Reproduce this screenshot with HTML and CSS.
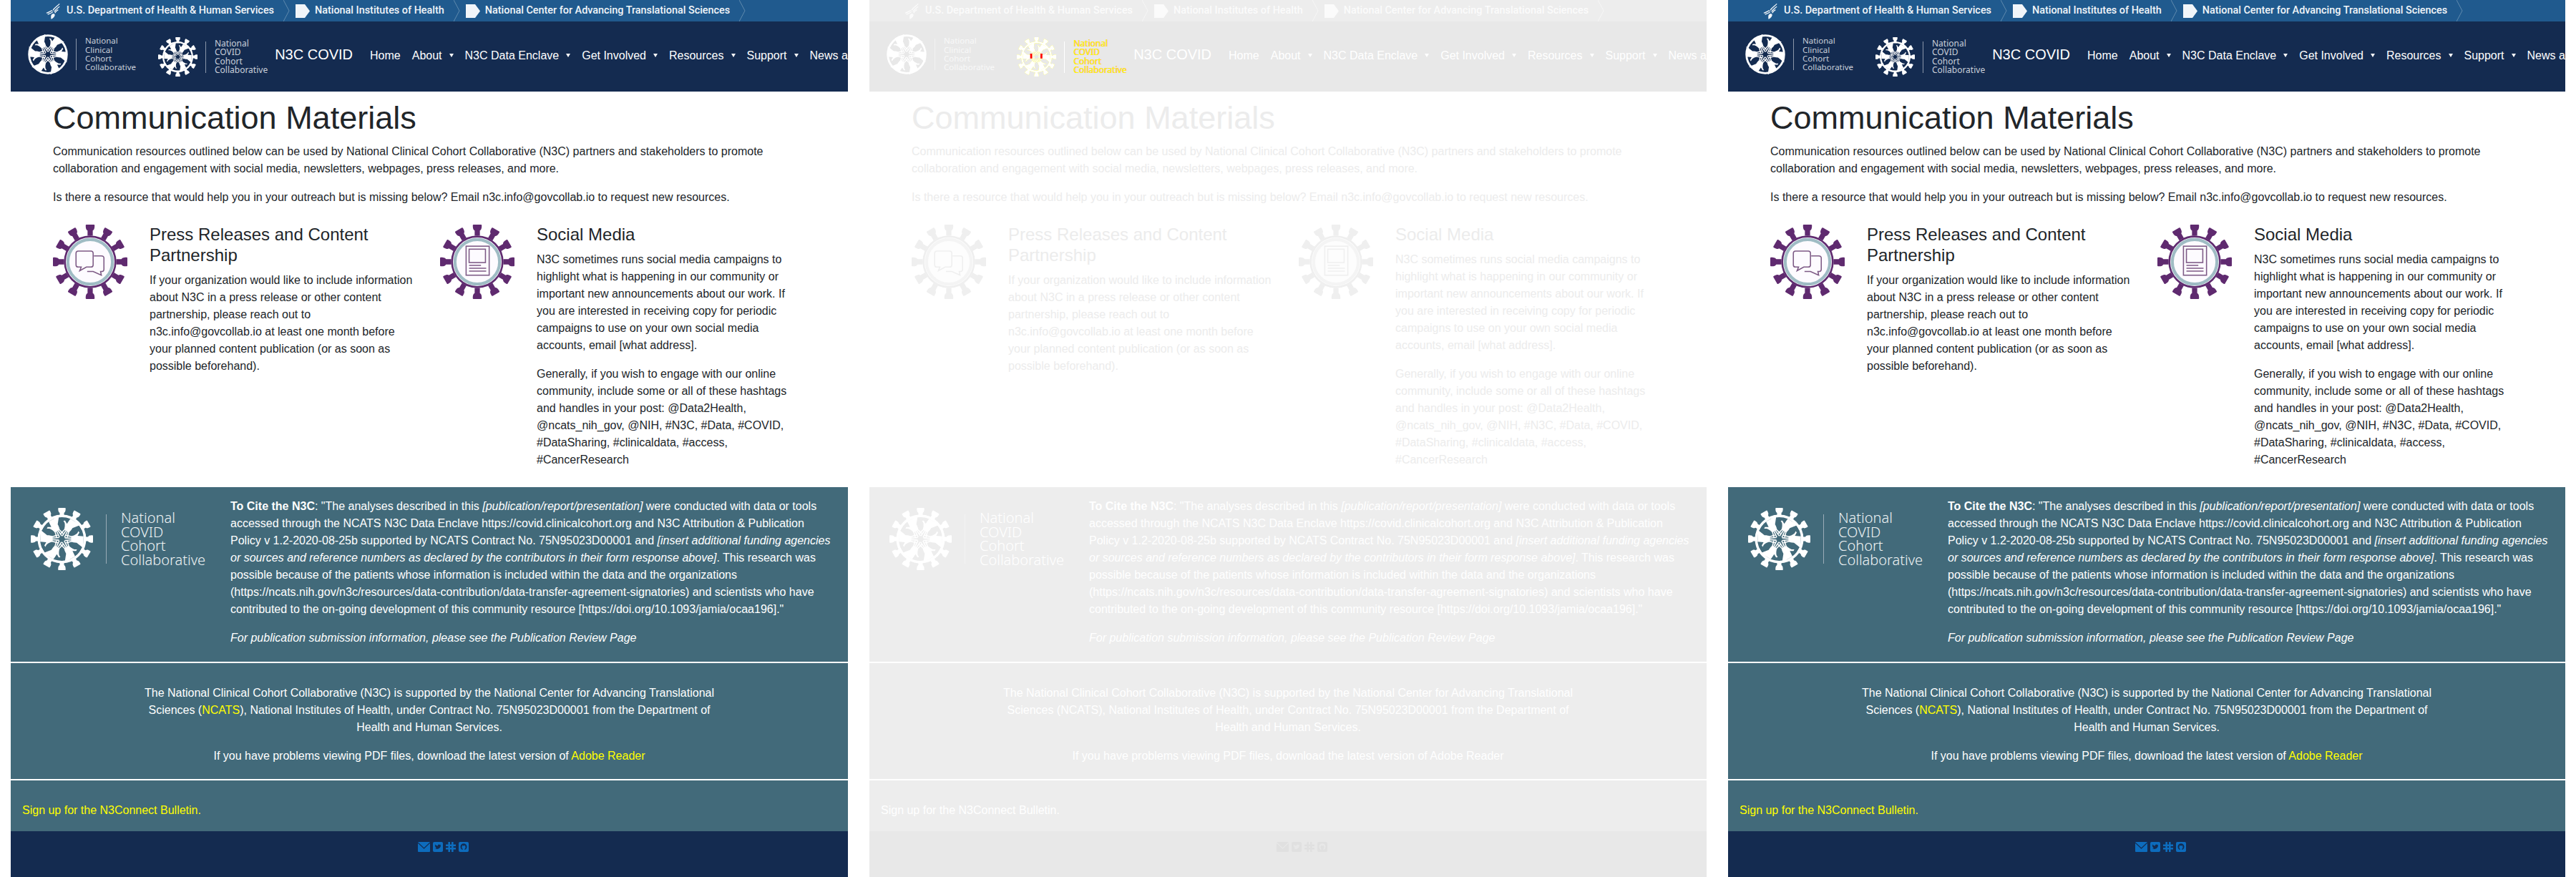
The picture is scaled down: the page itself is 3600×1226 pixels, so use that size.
FILE: index.html
```html
<!DOCTYPE html>
<html lang="en">
<head>
<meta charset="utf-8">
<title>Communication Materials</title>
<link rel="stylesheet" href="styles.css">
</head>
<body>
<svg class="sprite" xmlns="http://www.w3.org/2000/svg">
  <defs>
    <g id="hand">
      <path d="M44 3 L70 3 L58 18 C58 24 57 27 56 30 L44 30 C43 26 42 22 38 17 L33 14 L36 12 L43 16 Z" fill="currentColor"/>
      <path d="M45 29 L42 41 M48.5 30 L47.5 43 M52 30 L53 43 M55 29 L58 40" fill="none" stroke="currentColor" stroke-width="2.4" stroke-linecap="round"/>
    </g>
    <g id="hands">
      <use href="#hand" transform="rotate(30 50 50)"/>
      <use href="#hand" transform="rotate(90 50 50)"/>
      <use href="#hand" transform="rotate(150 50 50)"/>
      <use href="#hand" transform="rotate(210 50 50)"/>
      <use href="#hand" transform="rotate(270 50 50)"/>
      <use href="#hand" transform="rotate(330 50 50)"/>
    </g>
    <path id="spike" d="M46.5 15 L46.5 8 C45 7 44 6 44 1 Q44 0 45 0 L55 0 Q56 0 56 1 C56 6 55 7 53.5 8 L53.5 15 Z"/>
    <g id="spikes">
      <use href="#spike"/>
      <use href="#spike" transform="rotate(30 50 50)"/>
      <use href="#spike" transform="rotate(60 50 50)"/>
      <use href="#spike" transform="rotate(90 50 50)"/>
      <use href="#spike" transform="rotate(120 50 50)"/>
      <use href="#spike" transform="rotate(150 50 50)"/>
      <use href="#spike" transform="rotate(180 50 50)"/>
      <use href="#spike" transform="rotate(210 50 50)"/>
      <use href="#spike" transform="rotate(240 50 50)"/>
      <use href="#spike" transform="rotate(270 50 50)"/>
      <use href="#spike" transform="rotate(300 50 50)"/>
      <use href="#spike" transform="rotate(330 50 50)"/>
    </g>
    <symbol id="disc-logo" viewBox="0 0 100 100">
      <circle cx="50" cy="50" r="47" fill="none" stroke="currentColor" stroke-width="5"/>
      <use href="#hands"/>
    </symbol>
    <symbol id="virus-logo" viewBox="0 0 100 100">
      <g fill="currentColor"><use href="#spikes"/></g>
      <circle cx="50" cy="50" r="37" fill="none" stroke="currentColor" stroke-width="4"/>
      <g transform="translate(50 50) scale(.74) translate(-50 -50)"><use href="#hands"/></g>
      <path class="virus-noise" d="M34 42 H39 V54 H34 Z M60 42 H65 V54 H60 Z"/>
    </symbol>
    <symbol id="badge" viewBox="0 0 100 100">
      <g class="badge-spikes"><use href="#spikes"/></g>
      <circle class="badge-rim" cx="50" cy="50" r="34"/>
      <circle class="badge-teal" cx="50" cy="50" r="30"/>
    </symbol>
    <symbol id="eagle" viewBox="0 0 24 26">
      <path d="M22 2 C18 6 14 8 12 12 M22 6 C19 9 16 10 14 14 M20 11 C18 12 16 14 15 16 M2 16 C6 15 8 13 11 12 M4 18 C7 17 10 16 12 14" fill="none" stroke="currentColor" stroke-width="1.4"/>
      <path d="M9 20 C11 16 14 16 15 19 C14 23 11 25 9 25 Z" fill="currentColor"/>
    </symbol>
    <symbol id="flag" viewBox="0 0 20 19">
      <path d="M0 0 H13 L20 9.5 L13 19 H0 Z" fill="currentColor"/>
    </symbol>
    <symbol id="chev" viewBox="0 0 9 30">
      <path d="M0 0 L8 15 L0 30" fill="none" stroke="currentColor" stroke-width="1"/>
    </symbol>
    <symbol id="ico-mail" viewBox="0 0 17 14">
      <rect width="17" height="14" rx="1" fill="currentColor"/>
      <path d="M0 1 L8.5 9 L17 1" fill="none" class="ico-cut" stroke-width="1.2"/>
    </symbol>
    <symbol id="ico-twitter" viewBox="0 0 14 14">
      <rect width="14" height="14" rx="2" fill="currentColor"/>
      <path class="ico-fill" d="M11 4.2 C10.6 4.4 10.2 4.5 9.9 4.6 C10.3 4.3 10.5 3.9 10.7 3.5 C10.3 3.7 9.9 3.9 9.4 4 C8.5 3 6.5 3.7 6.9 5.4 C5.3 5.3 4 4.6 3.1 3.5 C2.7 4.3 2.9 5.2 3.6 5.7 C3.3 5.7 3 5.6 2.8 5.5 C2.8 6.3 3.4 7 4.2 7.2 C3.9 7.3 3.7 7.3 3.4 7.2 C3.7 7.9 4.3 8.3 5 8.4 C4.3 9 3.4 9.2 2.5 9.1 C6.6 11.4 11.2 8.6 11 4.2 Z"/>
    </symbol>
    <symbol id="ico-slack" viewBox="0 0 14 14">
      <path d="M4.7 0.5 V13.5 M9.3 0.5 V13.5 M0.5 4.7 H13.5 M0.5 9.3 H13.5" fill="none" stroke="currentColor" stroke-width="2.6" stroke-linecap="round"/>
    </symbol>
    <symbol id="ico-github" viewBox="0 0 14 14">
      <rect width="14" height="14" rx="2" fill="currentColor"/>
      <path class="ico-fill" d="M7 2.2 C4.4 2.2 2.5 4.2 2.5 6.7 C2.5 8.7 3.8 10.4 5.6 11 L5.6 9.6 C4.9 9.2 4.4 8.4 4.4 7.2 C4.4 6.7 4.6 6.2 4.9 5.9 L4.9 4.6 L6.1 5.2 C6.7 5.1 7.3 5.1 7.9 5.2 L9.1 4.6 L9.1 5.9 C9.4 6.2 9.6 6.7 9.6 7.2 C9.6 8.4 9.1 9.2 8.4 9.6 L8.4 11 C10.2 10.4 11.5 8.7 11.5 6.7 C11.5 4.2 9.6 2.2 7 2.2 Z"/>
    </symbol>
  </defs>
</svg>

<main class="triptych">

  <!-- Panel 1 -->
  <article class="panel">
    <div class="crumbs">
      <svg class="eagle"><use href="#eagle"/></svg>
      <span class="crumb crumb-hhs">U.S. Department of Health &amp; Human Services</span>
      <svg class="chev"><use href="#chev"/></svg>
      <svg class="flag"><use href="#flag"/></svg>
      <span class="crumb">National Institutes of Health</span>
      <svg class="chev"><use href="#chev"/></svg>
      <svg class="flag"><use href="#flag"/></svg>
      <span class="crumb">National Center for Advancing Translational Sciences</span>
      <svg class="chev"><use href="#chev"/></svg>
    </div>
    <header class="nav">
      <div class="logo logo-clinical">
        <svg class="logo-mark"><use href="#disc-logo"/></svg>
        <span class="logo-rule"></span>
        <span class="logo-text"><span>National</span><span>Clinical</span><span>Cohort</span><span>Collaborative</span></span>
      </div>
      <div class="logo logo-covid">
        <svg class="logo-mark"><use href="#virus-logo"/></svg>
        <span class="logo-rule"></span>
        <span class="logo-text"><span>National</span><span>COVID</span><span>Cohort</span><span>Collaborative</span></span>
      </div>
      <span class="brand">N3C COVID</span>
      <nav class="links">
        <a>Home</a><a class="drop">About</a><a class="drop">N3C Data Enclave</a><a class="drop">Get Involved</a><a class="drop">Resources</a><a class="drop">Support</a><a>News and Events</a>
      </nav>
    </header>
    <section class="content">
      <h1>Communication Materials</h1>
      <p>Communication resources outlined below can be used by National Clinical Cohort Collaborative (N3C) partners and stakeholders to promote collaboration and engagement with social media, newsletters, webpages, press releases, and more.</p>
      <p>Is there a resource that would help you in your outreach but is missing below? Email n3c.info@govcollab.io to request new resources.</p>
      <div class="cards">
        <div class="card">
          <svg class="badge">
            <use href="#badge"/>
            <svg viewBox="0 0 100 100"><g class="glyph"><path d="M34 35.5 H51 Q54 35.5 54 38.5 V54 Q54 57 51 57 H45 L36 62 L38 57 H34 Q31 57 31 54 V38.5 Q31 35.5 34 35.5 Z"/><path d="M55 42 H65 Q68.5 42 68.5 45 V60 Q68.5 63 65 63 H64 L65 68 L54 63 H46"/></g></svg>
          </svg>
          <div class="card-body">
            <h3>Press Releases and Content Partnership</h3>
            <p>If your organization would like to include information about N3C in a press release or other content partnership, please reach out to n3c.info@govcollab.io at least one month before your planned content publication (or as soon as possible beforehand).</p>
          </div>
        </div>
        <div class="card">
          <svg class="badge">
            <use href="#badge"/>
            <svg viewBox="0 0 100 100"><g class="glyph"><rect x="35" y="29" width="31" height="39"/><rect x="39" y="33" width="22" height="18"/><path d="M39 54.8 H55 M39 58.6 H62 M39 62.5 H62"/></g></svg>
          </svg>
          <div class="card-body">
            <h3>Social Media</h3>
            <p>N3C sometimes runs social media campaigns to highlight what is happening in our community or important new announcements about our work. If you are interested in receiving copy for periodic campaigns to use on your own social media accounts, email [what address].</p>
            <p>Generally, if you wish to engage with our online community, include some or all of these hashtags and handles in your post: @Data2Health, @ncats_nih_gov, @NIH, #N3C, #Data, #COVID, #DataSharing, #clinicaldata, #access, #CancerResearch</p>
          </div>
        </div>
      </div>
    </section>
    <section class="teal">
      <div class="cite">
        <div class="logo logo-foot">
          <svg class="logo-mark"><use href="#virus-logo"/></svg>
          <span class="logo-rule"></span>
          <span class="logo-text"><span>National</span><span>COVID</span><span>Cohort</span><span>Collaborative</span></span>
        </div>
        <div class="cite-text">
          <p><strong>To Cite the N3C</strong>: "The analyses described in this <em>[publication/report/presentation]</em> were conducted with data or tools accessed through the NCATS N3C Data Enclave https://covid.clinicalcohort.org and N3C Attribution &amp; Publication Policy v 1.2-2020-08-25b supported by NCATS Contract No. 75N95023D00001 and <em>[insert additional funding agencies or sources and reference numbers as declared by the contributors in their form response above]</em>. This research was possible because of the patients whose information is included within the data and the organizations (https://ncats.nih.gov/n3c/resources/data-contribution/data-transfer-agreement-signatories) and scientists who have contributed to the on-going development of this community resource [https://doi.org/10.1093/jamia/ocaa196]."</p>
          <p><em>For publication submission information, please see the Publication Review Page</em></p>
        </div>
      </div>
      <div class="support">
        <p>The National Clinical Cohort Collaborative (N3C) is supported by the National Center for Advancing Translational Sciences (<a class="hl">NCATS</a>), National Institutes of Health, under Contract No. 75N95023D00001 from the Department of Health and Human Services.</p>
        <p>If you have problems viewing PDF files, download the latest version of <a class="hl">Adobe Reader</a></p>
      </div>
      <div class="bulletin"><a class="hl">Sign up for the N3Connect Bulletin.</a></div>
    </section>
    <footer class="foot">
      <svg class="ico ico-w17"><use href="#ico-mail"/></svg>
      <svg class="ico"><use href="#ico-twitter"/></svg>
      <svg class="ico"><use href="#ico-slack"/></svg>
      <svg class="ico"><use href="#ico-github"/></svg>
    </footer>
  </article>

  <!-- Panel 2 -->
  <article class="panel ghost">
    <div class="crumbs">
      <svg class="eagle"><use href="#eagle"/></svg>
      <span class="crumb crumb-hhs">U.S. Department of Health &amp; Human Services</span>
      <svg class="chev"><use href="#chev"/></svg>
      <svg class="flag"><use href="#flag"/></svg>
      <span class="crumb">National Institutes of Health</span>
      <svg class="chev"><use href="#chev"/></svg>
      <svg class="flag"><use href="#flag"/></svg>
      <span class="crumb">National Center for Advancing Translational Sciences</span>
      <svg class="chev"><use href="#chev"/></svg>
    </div>
    <header class="nav">
      <div class="logo logo-clinical">
        <svg class="logo-mark"><use href="#disc-logo"/></svg>
        <span class="logo-rule"></span>
        <span class="logo-text"><span>National</span><span>Clinical</span><span>Cohort</span><span>Collaborative</span></span>
      </div>
      <div class="logo logo-covid">
        <svg class="logo-mark"><use href="#virus-logo"/></svg>
        <span class="logo-rule"></span>
        <span class="logo-text"><span>National</span><span>COVID</span><span>Cohort</span><span>Collaborative</span></span>
      </div>
      <span class="brand">N3C COVID</span>
      <nav class="links">
        <a>Home</a><a class="drop">About</a><a class="drop">N3C Data Enclave</a><a class="drop">Get Involved</a><a class="drop">Resources</a><a class="drop">Support</a><a>News and Events</a>
      </nav>
    </header>
    <section class="content">
      <h1>Communication Materials</h1>
      <p>Communication resources outlined below can be used by National Clinical Cohort Collaborative (N3C) partners and stakeholders to promote collaboration and engagement with social media, newsletters, webpages, press releases, and more.</p>
      <p>Is there a resource that would help you in your outreach but is missing below? Email n3c.info@govcollab.io to request new resources.</p>
      <div class="cards">
        <div class="card">
          <svg class="badge">
            <use href="#badge"/>
            <svg viewBox="0 0 100 100"><g class="glyph"><path d="M34 35.5 H51 Q54 35.5 54 38.5 V54 Q54 57 51 57 H45 L36 62 L38 57 H34 Q31 57 31 54 V38.5 Q31 35.5 34 35.5 Z"/><path d="M55 42 H65 Q68.5 42 68.5 45 V60 Q68.5 63 65 63 H64 L65 68 L54 63 H46"/></g></svg>
          </svg>
          <div class="card-body">
            <h3>Press Releases and Content Partnership</h3>
            <p>If your organization would like to include information about N3C in a press release or other content partnership, please reach out to n3c.info@govcollab.io at least one month before your planned content publication (or as soon as possible beforehand).</p>
          </div>
        </div>
        <div class="card">
          <svg class="badge">
            <use href="#badge"/>
            <svg viewBox="0 0 100 100"><g class="glyph"><rect x="35" y="29" width="31" height="39"/><rect x="39" y="33" width="22" height="18"/><path d="M39 54.8 H55 M39 58.6 H62 M39 62.5 H62"/></g></svg>
          </svg>
          <div class="card-body">
            <h3>Social Media</h3>
            <p>N3C sometimes runs social media campaigns to highlight what is happening in our community or important new announcements about our work. If you are interested in receiving copy for periodic campaigns to use on your own social media accounts, email [what address].</p>
            <p>Generally, if you wish to engage with our online community, include some or all of these hashtags and handles in your post: @Data2Health, @ncats_nih_gov, @NIH, #N3C, #Data, #COVID, #DataSharing, #clinicaldata, #access, #CancerResearch</p>
          </div>
        </div>
      </div>
    </section>
    <section class="teal">
      <div class="cite">
        <div class="logo logo-foot">
          <svg class="logo-mark"><use href="#virus-logo"/></svg>
          <span class="logo-rule"></span>
          <span class="logo-text"><span>National</span><span>COVID</span><span>Cohort</span><span>Collaborative</span></span>
        </div>
        <div class="cite-text">
          <p><strong>To Cite the N3C</strong>: "The analyses described in this <em>[publication/report/presentation]</em> were conducted with data or tools accessed through the NCATS N3C Data Enclave https://covid.clinicalcohort.org and N3C Attribution &amp; Publication Policy v 1.2-2020-08-25b supported by NCATS Contract No. 75N95023D00001 and <em>[insert additional funding agencies or sources and reference numbers as declared by the contributors in their form response above]</em>. This research was possible because of the patients whose information is included within the data and the organizations (https://ncats.nih.gov/n3c/resources/data-contribution/data-transfer-agreement-signatories) and scientists who have contributed to the on-going development of this community resource [https://doi.org/10.1093/jamia/ocaa196]."</p>
          <p><em>For publication submission information, please see the Publication Review Page</em></p>
        </div>
      </div>
      <div class="support">
        <p>The National Clinical Cohort Collaborative (N3C) is supported by the National Center for Advancing Translational Sciences (<a class="hl">NCATS</a>), National Institutes of Health, under Contract No. 75N95023D00001 from the Department of Health and Human Services.</p>
        <p>If you have problems viewing PDF files, download the latest version of <a class="hl">Adobe Reader</a></p>
      </div>
      <div class="bulletin"><a class="hl">Sign up for the N3Connect Bulletin.</a></div>
    </section>
    <footer class="foot">
      <svg class="ico ico-w17"><use href="#ico-mail"/></svg>
      <svg class="ico"><use href="#ico-twitter"/></svg>
      <svg class="ico"><use href="#ico-slack"/></svg>
      <svg class="ico"><use href="#ico-github"/></svg>
    </footer>
  </article>

  <!-- Panel 3 -->
  <article class="panel">
    <div class="crumbs">
      <svg class="eagle"><use href="#eagle"/></svg>
      <span class="crumb crumb-hhs">U.S. Department of Health &amp; Human Services</span>
      <svg class="chev"><use href="#chev"/></svg>
      <svg class="flag"><use href="#flag"/></svg>
      <span class="crumb">National Institutes of Health</span>
      <svg class="chev"><use href="#chev"/></svg>
      <svg class="flag"><use href="#flag"/></svg>
      <span class="crumb">National Center for Advancing Translational Sciences</span>
      <svg class="chev"><use href="#chev"/></svg>
    </div>
    <header class="nav">
      <div class="logo logo-clinical">
        <svg class="logo-mark"><use href="#disc-logo"/></svg>
        <span class="logo-rule"></span>
        <span class="logo-text"><span>National</span><span>Clinical</span><span>Cohort</span><span>Collaborative</span></span>
      </div>
      <div class="logo logo-covid">
        <svg class="logo-mark"><use href="#virus-logo"/></svg>
        <span class="logo-rule"></span>
        <span class="logo-text"><span>National</span><span>COVID</span><span>Cohort</span><span>Collaborative</span></span>
      </div>
      <span class="brand">N3C COVID</span>
      <nav class="links">
        <a>Home</a><a class="drop">About</a><a class="drop">N3C Data Enclave</a><a class="drop">Get Involved</a><a class="drop">Resources</a><a class="drop">Support</a><a>News and Events</a>
      </nav>
    </header>
    <section class="content">
      <h1>Communication Materials</h1>
      <p>Communication resources outlined below can be used by National Clinical Cohort Collaborative (N3C) partners and stakeholders to promote collaboration and engagement with social media, newsletters, webpages, press releases, and more.</p>
      <p>Is there a resource that would help you in your outreach but is missing below? Email n3c.info@govcollab.io to request new resources.</p>
      <div class="cards">
        <div class="card">
          <svg class="badge">
            <use href="#badge"/>
            <svg viewBox="0 0 100 100"><g class="glyph"><path d="M34 35.5 H51 Q54 35.5 54 38.5 V54 Q54 57 51 57 H45 L36 62 L38 57 H34 Q31 57 31 54 V38.5 Q31 35.5 34 35.5 Z"/><path d="M55 42 H65 Q68.5 42 68.5 45 V60 Q68.5 63 65 63 H64 L65 68 L54 63 H46"/></g></svg>
          </svg>
          <div class="card-body">
            <h3>Press Releases and Content Partnership</h3>
            <p>If your organization would like to include information about N3C in a press release or other content partnership, please reach out to n3c.info@govcollab.io at least one month before your planned content publication (or as soon as possible beforehand).</p>
          </div>
        </div>
        <div class="card">
          <svg class="badge">
            <use href="#badge"/>
            <svg viewBox="0 0 100 100"><g class="glyph"><rect x="35" y="29" width="31" height="39"/><rect x="39" y="33" width="22" height="18"/><path d="M39 54.8 H55 M39 58.6 H62 M39 62.5 H62"/></g></svg>
          </svg>
          <div class="card-body">
            <h3>Social Media</h3>
            <p>N3C sometimes runs social media campaigns to highlight what is happening in our community or important new announcements about our work. If you are interested in receiving copy for periodic campaigns to use on your own social media accounts, email [what address].</p>
            <p>Generally, if you wish to engage with our online community, include some or all of these hashtags and handles in your post: @Data2Health, @ncats_nih_gov, @NIH, #N3C, #Data, #COVID, #DataSharing, #clinicaldata, #access, #CancerResearch</p>
          </div>
        </div>
      </div>
    </section>
    <section class="teal">
      <div class="cite">
        <div class="logo logo-foot">
          <svg class="logo-mark"><use href="#virus-logo"/></svg>
          <span class="logo-rule"></span>
          <span class="logo-text"><span>National</span><span>COVID</span><span>Cohort</span><span>Collaborative</span></span>
        </div>
        <div class="cite-text">
          <p><strong>To Cite the N3C</strong>: "The analyses described in this <em>[publication/report/presentation]</em> were conducted with data or tools accessed through the NCATS N3C Data Enclave https://covid.clinicalcohort.org and N3C Attribution &amp; Publication Policy v 1.2-2020-08-25b supported by NCATS Contract No. 75N95023D00001 and <em>[insert additional funding agencies or sources and reference numbers as declared by the contributors in their form response above]</em>. This research was possible because of the patients whose information is included within the data and the organizations (https://ncats.nih.gov/n3c/resources/data-contribution/data-transfer-agreement-signatories) and scientists who have contributed to the on-going development of this community resource [https://doi.org/10.1093/jamia/ocaa196]."</p>
          <p><em>For publication submission information, please see the Publication Review Page</em></p>
        </div>
      </div>
      <div class="support">
        <p>The National Clinical Cohort Collaborative (N3C) is supported by the National Center for Advancing Translational Sciences (<a class="hl">NCATS</a>), National Institutes of Health, under Contract No. 75N95023D00001 from the Department of Health and Human Services.</p>
        <p>If you have problems viewing PDF files, download the latest version of <a class="hl">Adobe Reader</a></p>
      </div>
      <div class="bulletin"><a class="hl">Sign up for the N3Connect Bulletin.</a></div>
    </section>
    <footer class="foot">
      <svg class="ico ico-w17"><use href="#ico-mail"/></svg>
      <svg class="ico"><use href="#ico-twitter"/></svg>
      <svg class="ico"><use href="#ico-slack"/></svg>
      <svg class="ico"><use href="#ico-github"/></svg>
    </footer>
  </article>
</main>
</body>
</html>
```
FILE: styles.css
```css
* { box-sizing: border-box; }
html, body { margin: 0; background: #fff; }
body {
  font-family: "Liberation Sans", Arial, sans-serif;
  font-size: 16px;
  line-height: 24px;
  overflow: hidden;
}
.sprite { display: none; }
p { margin: 0 0 16px; }
h1, h3 { font-weight: 400; margin: 0; }

.triptych {
  display: grid;
  grid-template-columns: repeat(3, 1170px);
  column-gap: 30px;
  padding: 0 15px;
  height: 1226px;
}
.panel {
  --bar: #205a8e;
  --bar-line: #5f89ad;
  --bar-ink: #f1f5f9;
  --navy: #142b50;
  --logo-ink: #c9cfd9;
  --foot-logo-ink: #eef2f4;
  --ink: #212529;
  --teal: #426a7a;
  --teal-ink: #ffffff;
  --link: #ffff00;
  --purple: #5f2a6f;
  --rim: #9fbcc4;
  --well: #fdfbff;
  --glyph: #7d5a85;
  --ico: #0d6cbd;
  --ico-cut: #142b50;
  display: flex;
  flex-direction: column;
  height: 1226px;
  overflow: hidden;
  color: var(--ink);
}
.ghost {
  --bar: #ededed;
  --bar-line: #f6f6f6;
  --bar-ink: #fbfbfb;
  --navy: #e8e8e8;
  --logo-ink: #f8f8f8;
  --foot-logo-ink: #ffffff;
  --ink: #ececec;
  --teal: #ededed;
  --link: #ffffff;
  --purple: #efefef;
  --rim: #f4f4f4;
  --well: #fdfdfd;
  --glyph: #efefef;
  --ico: #e0e0e0;
  --ico-cut: #e8e8e8;
}

/* Breadcrumb strip */
.crumbs {
  display: flex;
  align-items: center;
  height: 30px;
  padding-left: 48px;
  background: var(--bar);
  color: var(--bar-ink);
  white-space: nowrap;
  font-family: Roboto, "Noto Sans", sans-serif;
  font-size: 14.4px;
  font-weight: 500;
  line-height: 30px;
  flex: none;
}
.eagle { width: 22px; height: 25px; margin-right: 8px; flex: none; }
.chev { width: 9px; height: 30px; margin: 0 8px 0 13px; color: var(--bar-line); flex: none; }
.flag { width: 20px; height: 19px; margin-right: 7px; flex: none; }

/* Main nav */
.nav {
  display: flex;
  align-items: flex-start;
  height: 98px;
  padding-left: 24px;
  background: var(--navy);
  color: #fff;
  white-space: nowrap;
  overflow: hidden;
  flex: none;
}
.logo { display: flex; align-items: center; flex: none; }
.logo-mark { flex: none; color: #fff; }
.logo-rule { width: 1px; background: var(--logo-ink); opacity: .65; flex: none; }
.logo-text {
  display: flex;
  flex-direction: column;
  color: var(--logo-ink);
  font-family: "Noto Sans", "Open Sans", sans-serif;
}
.logo-clinical { margin-top: 18px; width: 182px; }
.logo-clinical .logo-mark { width: 56px; height: 56px; }
.logo-clinical .logo-rule { height: 44px; margin: 0 12px 0 11px; }
.logo-clinical .logo-text { font-size: 11.5px; line-height: 12.4px; }
.logo-covid { margin-top: 22px; }
.logo-covid .logo-mark { width: 55px; height: 55px; }
.logo-covid .logo-rule { height: 44px; margin: 0 12px 0 11px; }
.logo-covid .logo-text { font-size: 12px; line-height: 12.4px; }
.virus-noise { fill: var(--noise, none); }
.brand { font-size: 20px; line-height: 30px; margin: 31px 24px 0 10px; flex: none; }
.links { display: flex; gap: 16px; margin-top: 36px; flex: none; }
.links a { color: #fff; line-height: 24px; }
.drop::after {
  content: "";
  display: inline-block;
  margin-left: 10px;
  vertical-align: 3px;
  border-top: 5px solid #fff;
  border-left: 3.5px solid transparent;
  border-right: 3.5px solid transparent;
}

/* Main content */
.content { padding: 10px 59px 10px; flex: none; }
h1 { font-size: 45px; line-height: 54px; margin-bottom: 8px; }
.content > p { width: 1040px; }
.cards { display: flex; gap: 36px; margin-top: 26px; }
.card { display: flex; width: 505px; flex: none; }
.badge { width: 104px; height: 104px; margin-right: 31px; flex: none; }
.badge-spikes { fill: var(--purple); }
.badge-rim { fill: var(--well); stroke: var(--purple); stroke-width: 2.5; }
.badge-teal { fill: var(--well); stroke: var(--rim); stroke-width: 4; }
.glyph { fill: none; stroke: var(--glyph); stroke-width: 1.5; }
.card-body { width: 370px; flex: none; }
h3 { font-size: 24px; line-height: 28.8px; margin-bottom: 8px; }

/* Teal band */
.teal { background: var(--teal); color: var(--teal-ink); flex: none; }
.cite {
  display: flex;
  align-items: flex-start;
  padding: 15px 0 5px 28px;
  border-bottom: 2px solid #fff;
}
.cite-text { width: 844px; flex: none; }
.logo-foot { width: 279px; margin-top: 14px; }
.logo-foot .logo-mark { width: 87px; height: 87px; }
.logo-foot .logo-rule { height: 69px; margin: 0 20px 0 18px; }
.logo-foot .logo-text { font-size: 20px; line-height: 19.4px; color: var(--foot-logo-ink); font-weight: 300; }
.support {
  padding: 30px 180px 4px;
  text-align: center;
  border-bottom: 2px solid #fff;
}
.hl { color: var(--link); }
.bulletin { padding: 30px 16px 17px; }

/* Bottom bar */
.foot {
  display: flex;
  flex: 1;
  align-items: flex-start;
  gap: 4px;
  padding: 15px 0 0 569px;
  background: var(--navy);
  color: var(--ico);
}
.ico { width: 14px; height: 14px; flex: none; }
.ico-w17 { width: 17px; }
.ico-fill { fill: var(--ico-cut); }
.ico-cut { stroke: var(--ico-cut); }

/* Second logo in the ghost panel is a noisy, high-contrast rendering */
.ghost .logo-covid { --noise: #ff0000; }
.ghost .logo-covid .logo-mark { filter: drop-shadow(.6px 0 0 #ffff00); }
.ghost .logo-covid .logo-text { color: #ffff00; text-shadow: .5px 0 0 rgba(255, 0, 0, .6); }
.ghost .logo-covid .logo-rule { background: #fff; opacity: 1; }
```
